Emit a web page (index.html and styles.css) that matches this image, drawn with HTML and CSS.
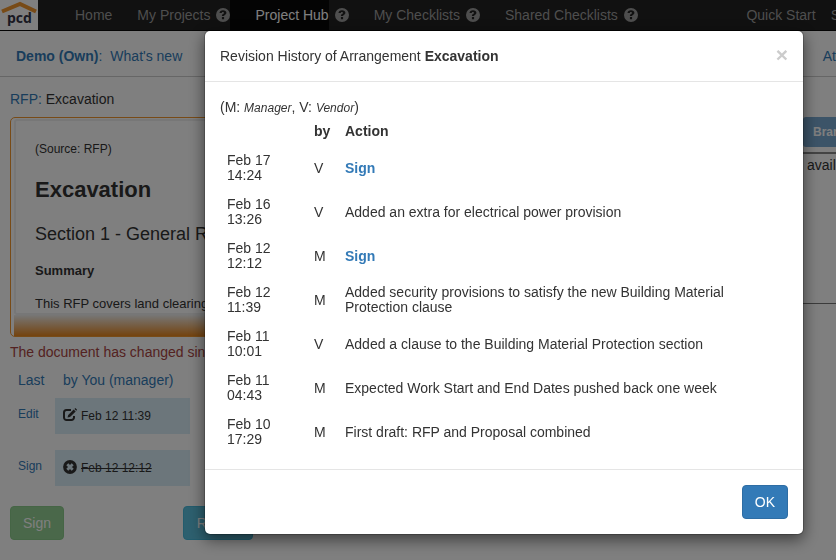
FILE: index.html
```html
<!DOCTYPE html>
<html lang="en">
<head>
<meta charset="utf-8">
<meta name="viewport" content="width=device-width, initial-scale=1">
<title>Project Hub</title>
<link rel="stylesheet" href="styles.css">
</head>
<body>
<svg class="defs" aria-hidden="true">
  <symbol id="help" viewBox="0 0 14 14">
    <path fill-rule="evenodd" d="M7 0a7 7 0 1 1 0 14A7 7 0 0 1 7 0zM3.500 5h2.300c0-.7.4-1 1.100-1s1.100.3 1.100.8c0 .5-.3.8-.9 1.100C6.300 6.300 5.900 6.900 5.900 8h2.200c0-.5.200-.7.700-1 1.100-.5 1.600-1.200 1.600-2.200C10.400 3.200 9.100 2.200 7 2.200S3.500 3.300 3.500 5zM5.900 9v2.300h2.200V9z"/>
  </symbol>
</svg>

<nav class="navbar">
  <a class="logo" href="#" aria-label="pcd">
    <svg viewBox="0 0 38 30" width="38" height="30" aria-hidden="true">
      <path d="M2 11.500 20 4l16 7.500" fill="none" stroke="#f0962e" stroke-width="4"/>
      <text x="7" y="23" class="logo-text">pcd</text>
    </svg>
  </a>
  <a class="nav-link home" href="#">Home</a>
  <a class="nav-link" href="#">My Projects</a>
  <svg class="help" role="img" aria-label="Help"><use href="#help"/></svg>
  <a class="nav-link active" href="#">Project Hub</a>
  <svg class="help" role="img" aria-label="Help"><use href="#help"/></svg>
  <a class="nav-link" href="#">My Checklists</a>
  <svg class="help" role="img" aria-label="Help"><use href="#help"/></svg>
  <a class="nav-link" href="#">Shared Checklists</a>
  <svg class="help" role="img" aria-label="Help"><use href="#help"/></svg>
  <div class="nav-end">
    <a href="#">Quick Start</a>
    <a href="#">S</a>
  </div>
</nav>

<header class="project-bar">
  <div class="project-links"><a href="#"><b>Demo (Own)</b>:</a><a href="#">What's new</a></div>
  <a class="attach" href="#">At</a>
</header>

<main class="page">
  <section class="main-col">
    <div class="crumb"><a href="#">RFP:</a> Excavation</div>
    <div class="doc-frame">
      <article class="doc">
        <p class="source">(Source: RFP)</p>
        <h1>Excavation</h1>
        <h2>Section 1 - General R</h2>
        <h3>Summary</h3>
        <p class="summary">This RFP covers land clearing</p>
      </article>
      <div class="doc-fade"></div>
    </div>
    <p class="warning">The document has changed sin</p>
    <div class="status">
      <a href="#">Last</a><a class="who" href="#">by You (manager)</a>
      <a class="small" href="#">Edit</a>
      <div class="stamp">
        <svg viewBox="0 0 16 14" width="16" height="14" aria-hidden="true">
          <path d="M9 2H4.500A2.500 2.500 0 0 0 2 4.500v5A2.500 2.500 0 0 0 4.500 12h5a2.500 2.500 0 0 0 2.500-2.500V8" fill="none" stroke="#333" stroke-width="2"/>
          <path d="M5.500 9.500 6.200 7l5.500-5.500 2 2L8 9zM12.400.9l1-.8 1.700 1.700-.8 1z" fill="#333"/>
        </svg>
        <span>Feb 12 11:39</span>
      </div>
      <a class="small" href="#">Sign</a>
      <div class="stamp">
        <svg viewBox="0 0 16 14" width="16" height="14" aria-hidden="true">
          <circle cx="8" cy="7" r="6.900" fill="#333"/>
          <path d="m5.300 4.300 5.400 5.400m0-5.400-5.400 5.400" stroke="#d9edf7" stroke-width="2.800"/>
        </svg>
        <s>Feb 12 12:12</s>
      </div>
    </div>
    <div class="actions">
      <button class="btn success faded" type="button">Sign</button>
      <button class="btn info" type="button">Revise</button>
    </div>
  </section>
  <aside class="side-col">
    <button class="btn-branch" type="button">Bran</button>
    <div class="notes">avail</div>
  </aside>
</main>

<div class="backdrop">
  <div class="modal" role="dialog" aria-modal="true" aria-labelledby="title">
    <div class="modal-header">
      <div id="title">Revision History of Arrangement <b>Excavation</b></div>
      <button class="close" type="button" aria-label="Close">×</button>
    </div>
    <div class="modal-body">
      <div class="legend">(M: <i>Manager</i>, V: <i>Vendor</i>)</div>
      <table>
        <thead><tr><th class="date"></th><th class="by">by</th><th>Action</th></tr></thead>
        <tbody>
          <tr><td>Feb 17<br>14:24</td><td>V</td><td><a href="#">Sign</a></td></tr>
          <tr><td>Feb 16<br>13:26</td><td>V</td><td>Added an extra for electrical power provision</td></tr>
          <tr><td>Feb 12<br>12:12</td><td>M</td><td><a href="#">Sign</a></td></tr>
          <tr><td>Feb 12<br>11:39</td><td>M</td><td>Added security provisions to satisfy the new Building Material Protection clause</td></tr>
          <tr><td>Feb 11<br>10:01</td><td>V</td><td>Added a clause to the Building Material Protection section</td></tr>
          <tr><td>Feb 11<br>04:43</td><td>M</td><td>Expected Work Start and End Dates pushed back one week</td></tr>
          <tr><td>Feb 10<br>17:29</td><td>M</td><td>First draft: RFP and Proposal combined</td></tr>
        </tbody>
      </table>
    </div>
    <div class="modal-footer"><button class="btn primary" type="button">OK</button></div>
  </div>
</div>
</body>
</html>
```
FILE: styles.css
```css
* { box-sizing: border-box; }
body {
  margin: 0;
  overflow: hidden;
  background: #fff;
  color: #333;
  font: 14px/20px "Liberation Sans", Arial, sans-serif;
}
a { color: #337ab7; text-decoration: none; }
p, h1, h2, h3 { margin: 0; }
button { font-family: inherit; }
.defs { position: absolute; width: 0; height: 0; }

.navbar {
  display: flex;
  align-items: center;
  height: 31px;
  background: #222;
  border-bottom: 1px solid #080808;
  white-space: nowrap;
}
.navbar a { color: #9d9d9d; line-height: 30px; }
.navbar .logo { display: flex; background: #fff; }
.logo-text { font: bold 14px "Open Sans", sans-serif; fill: #334; }
.navbar .nav-link { padding-left: 25px; }
.navbar .home { padding-left: 37px; }
.navbar .active { background: #080808; color: #fff; }
.help { width: 14px; height: 14px; margin-left: 6px; fill: #9d9d9d; flex: none; }
.nav-end { display: flex; gap: 15px; margin-left: auto; margin-right: -4px; }

.project-bar {
  display: flex;
  justify-content: space-between;
  padding: 15px 0 10px 16px;
  border-bottom: 1px solid #ccc;
}
.project-links { display: flex; gap: 8px; }

.page { display: flex; justify-content: space-between; }
.main-col { flex: 1; padding: 12px 0 0 10px; }
.crumb { padding-bottom: 8px; }
.doc-frame { border: 1px solid #f0962e; border-radius: 5px; padding: 1px 0 0 3px; }
.doc {
  border: 2px solid #eee;
  border-radius: 3px;
  height: 196px;
  padding: 18px 19px 0;
  white-space: nowrap;
}
.source { font-size: 12px; }
h1 { font-size: 22px; line-height: 24px; padding-top: 19px; }
h2 { font-size: 18px; font-weight: normal; line-height: 20px; padding-top: 22px; }
h3 { font-size: 13px; padding-top: 17px; }
.summary { font-size: 13px; padding-top: 13px; }
.doc-fade { height: 21px; background: linear-gradient(#eee, #e8871e); }
.warning { color: #a94442; padding-top: 5px; }

.status {
  display: grid;
  grid-template-columns: 37px 135px;
  padding: 8px 0 0 8px;
}
.status > .who { padding-left: 8px; }
.small { font-size: 12px; padding-top: 14px; }
.stamp {
  display: flex;
  align-items: center;
  gap: 3px;
  height: 36px;
  margin: 8px 0;
  padding-left: 7px;
  background: #d9edf7;
  font-size: 12px;
}
.stamp svg { margin-bottom: 2px; }

.btn {
  height: 34px;
  padding: 6px 12px;
  border: 1px solid;
  border-radius: 4px;
  color: #fff;
  font-size: 14px;
  line-height: 20px;
}
.success { background: #5cb85c; border-color: #4cae4c; }
.info { background: #5bc0de; border-color: #46b8da; min-width: 70px; }
.primary { background: #337ab7; border-color: #2e6da4; }
.faded { opacity: .65; }
.actions { display: flex; gap: 119px; padding-top: 12px; }

.side-col { width: 33px; padding-top: 40px; }
.btn-branch {
  height: 30px;
  padding: 5px 10px;
  border: 0;
  border-radius: 3px;
  background: #337ab7;
  color: #fff;
  font-size: 12px;
  font-weight: bold;
  line-height: 20px;
  opacity: .65;
}
.notes {
  height: 152px;
  margin-top: 5px;
  padding: 1px 4px;
  border-top: 2px solid #888;
  border-bottom: 1px solid #777;
}

.backdrop {
  position: fixed;
  inset: 0;
  padding: 30px 32px 0 204px;
  background: rgba(0, 0, 0, .5);
}
.modal {
  background: #fff;
  background-clip: padding-box;
  border: 1px solid rgba(0, 0, 0, .2);
  border-radius: 6px;
  box-shadow: 0 5px 15px rgba(0, 0, 0, .5);
}
.modal-header {
  display: flex;
  justify-content: space-between;
  padding: 15px;
  border-bottom: 1px solid #e5e5e5;
}
.close {
  padding: 0;
  border: 0;
  background: none;
  color: #ccc;
  font-size: 21px;
  font-weight: bold;
  line-height: 18px;
  height: 18px;
}
.modal-body { padding: 15px; }
.modal-body i { font-size: 12px; }
table { width: 100%; border-collapse: collapse; line-height: 15px; }
th, td { padding: 7px; text-align: left; vertical-align: middle; }
th { padding-top: 6px; }
.date { width: 87px; }
.by { width: 31px; }
td a { font-weight: bold; }
.modal-footer {
  display: flex;
  justify-content: flex-end;
  padding: 15px;
  border-top: 1px solid #e5e5e5;
}
```
